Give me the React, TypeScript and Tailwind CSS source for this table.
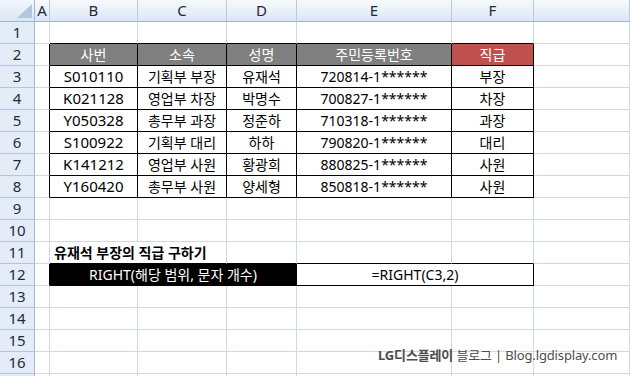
import React from "react";

type Edge = "grid" | "black";
type Fill = "none" | "gray" | "red" | "black";

interface CellDef {
  text?: React.ReactNode;
  span?: number;
  r?: Edge;
  b?: Edge;
  fill?: Fill;
  left?: boolean;
  bold?: boolean;
  wide?: boolean;
}

const RIGHT: Record<Edge, string> = {
  grid: "border-r border-r-[#d0d7e5]",
  black: "border-r border-r-black",
};
const BOTTOM: Record<Edge, string> = {
  grid: "border-b border-b-[#d0d7e5]",
  black: "border-b border-b-black",
};
const FILL: Record<Fill, string> = {
  none: "bg-white text-black",
  gray: "bg-[#808080] text-white",
  red: "bg-[#c0504d] text-white",
  black: "bg-black text-white",
};
const SPAN: Record<number, string> = {
  1: "col-span-1",
  2: "col-span-2",
  3: "col-span-3",
};

const COLS = ["A", "B", "C", "D", "E", "F", ""];

const people = [
  ["S010110", "기획부 부장", "유재석", "720814-1******", "부장"],
  ["K021128", "영업부 차장", "박명수", "700827-1******", "차장"],
  ["Y050328", "총무부 과장", "정준하", "710318-1******", "과장"],
  ["S100922", "기획부 대리", "하하", "790820-1******", "대리"],
  ["K141212", "영업부 사원", "황광희", "880825-1******", "사원"],
  ["Y160420", "총무부 사원", "양세형", "850818-1******", "사원"],
];

const blank = (): CellDef => ({ r: "grid", b: "grid" });

function buildRows(): CellDef[][] {
  const rows: CellDef[][] = [];
  // row 1: top edge of the table
  rows.push([
    blank(),
    ...[0, 1, 2, 3, 4].map((): CellDef => ({ r: "grid", b: "black" })),
    blank(),
  ]);
  // row 2: headings
  const heads = ["사번", "소속", "성명", "주민등록번호", "직급"];
  rows.push([
    { r: "black", b: "grid" },
    ...heads.map(
      (h, i): CellDef => ({ text: h, r: "black", b: "black", fill: i === 4 ? "red" : "gray" })
    ),
    blank(),
  ]);
  // rows 3-8: records
  people.forEach((p) => {
    rows.push([
      { r: "black", b: "grid" },
      ...p.map((v, i): CellDef => ({ text: v, r: "black", b: "black", wide: i === 0 })),
      blank(),
    ]);
  });
  // rows 9-10
  rows.push(Array.from({ length: 7 }, blank));
  rows.push(Array.from({ length: 7 }, blank));
  // row 11: caption
  rows.push([
    blank(),
    { text: "유재석 부장의 직급 구하기", span: 2, r: "grid", b: "black", left: true, bold: true },
    { r: "grid", b: "black" },
    { r: "grid", b: "black" },
    { r: "grid", b: "black" },
    blank(),
  ]);
  // row 12: syntax and formula
  rows.push([
    { r: "black", b: "grid" },
    { text: "RIGHT(해당 범위, 문자 개수)", span: 3, r: "black", b: "black", fill: "black" },
    { text: "=RIGHT(C3,2)", span: 2, r: "black", b: "black" },
    blank(),
  ]);
  // rows 13-17
  for (let i = 0; i < 5; i++) rows.push(Array.from({ length: 7 }, blank));
  return rows;
}

function Corner() {
  return (
    <div className="h-[22px] border-r border-r-[#9eb6ce] border-b border-b-[#9eb6ce] bg-gradient-to-b from-[#f3f7fc] to-[#dbe5f2] relative">
      <svg width="34" height="21" className="absolute left-0 top-0">
        <polygon points="32,4 32,18 17,18" fill="#b4c6dc" />
      </svg>
    </div>
  );
}

export default function App() {
  const rows = buildRows();
  return (
    <div className="relative w-[630px] h-[376px] overflow-hidden bg-white font-['Noto_Sans','Noto_Sans_CJK_KR',sans-serif] text-[14px]">
      <div className="grid grid-cols-[35px_15px_88px_89px_70px_155px_82px_96px] auto-rows-[22px]">
        <Corner />
        {COLS.map((c, i) => (
          <div
            key={"h" + i}
            className="flex items-center justify-center border-r border-r-[#b8cadd] border-b border-b-[#9eb6ce] bg-gradient-to-b from-[#f7fafd] to-[#dce6f3] text-[#1f2a3a] text-[15px] leading-none"
          >
            {c}
          </div>
        ))}
        {rows.map((row, ri) => (
          <React.Fragment key={"r" + ri}>
            <div className="flex items-center justify-center bg-[#e4ecf7] border-r border-r-[#9eb6ce] border-b border-b-[#b3c5da] text-[#1f2a3a] text-[15px] leading-none">
              {ri < 16 ? ri + 1 : ""}
            </div>
            {row.map((c, ci) => (
              <div
                key={ci}
                className={[
                  "flex items-center leading-none whitespace-nowrap",
                  c.left ? "justify-start pl-[4px]" : "justify-center",
                  c.bold ? "font-bold" : "",
                  c.wide ? "text-[15px]" : "",
                  SPAN[c.span ?? 1],
                  RIGHT[c.r ?? "grid"],
                  BOTTOM[c.b ?? "grid"],
                  FILL[c.fill ?? "none"],
                ].join(" ")}
              >
                {c.text}
              </div>
            ))}
          </React.Fragment>
        ))}
      </div>
      <div className="absolute left-[378px] top-[346px] text-[13px] leading-[18px] tracking-[-0.15px] text-[#4d4d4d] whitespace-nowrap">
        <span className="font-bold">LG디스플레이</span> 블로그 | Blog.lgdisplay.com
      </div>
    </div>
  );
}
